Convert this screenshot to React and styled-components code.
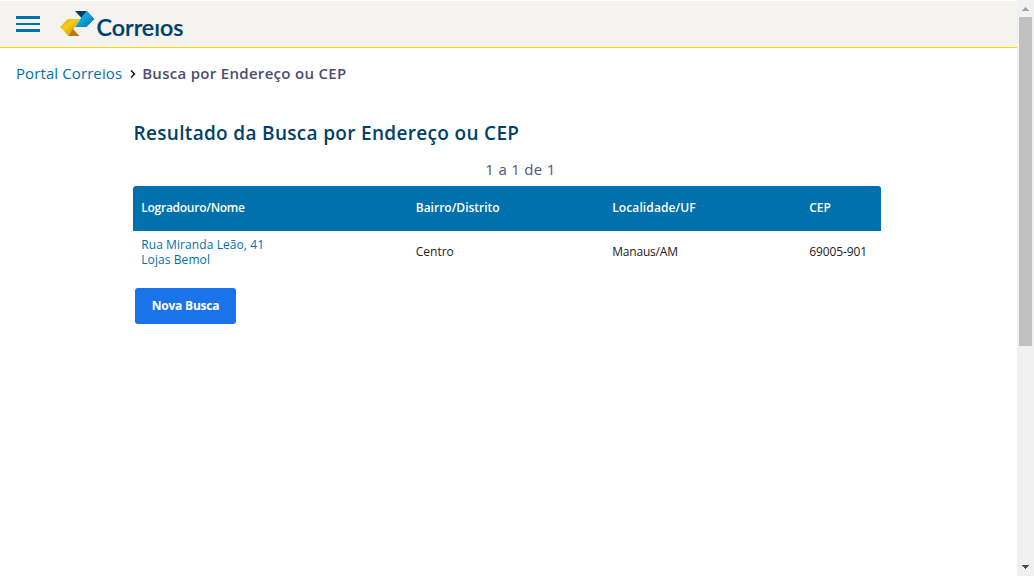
import React from "react";
import styled, { createGlobalStyle } from "styled-components";

const Global = createGlobalStyle`
  *{box-sizing:border-box}
  html,body{margin:0;padding:0;background:#fff;overflow:hidden}
  body{font-family:"Trebuchet MS","Open Sans","Noto Sans",sans-serif;color:#222}
  a{text-decoration:none;color:#0071ad}
`;
const Screen = styled.div`display:flex;height:576px;width:1034px;`;
const Page = styled.div`flex:1;min-width:0;`;
const Header = styled.header`
  height:47px;margin-top:1px;background:#f4f3ef;border-bottom:1px solid #ffd400;
  display:flex;align-items:flex-start;padding-left:16px;
`;
const MenuButton = styled.button`
  width:24px;height:16px;margin:15px 19px 0 0;padding:0;border:0;background:none;
  display:flex;flex-direction:column;justify-content:space-between;
`;
const Bar = styled.span`height:${(p) => p.$thick}px;width:24px;background:#0071ad;`;
const Logo = styled.svg`display:block;margin-top:5px;`;
const Breadcrumb = styled.nav`
  display:flex;align-items:center;height:24px;margin:13px 0 0 16px;font-size:15px;
`;
const Chevron = styled.svg`margin:1px 6px 0 7px;flex:none;`;
const Text = styled.span`
  white-space:nowrap;letter-spacing:${(p) => p.$track || 0}px;
`;
const Current = styled(Text)`font-weight:600;color:#4d4d73;`;
const Content = styled.main`margin:34px 0 0 133px;width:748px;`;
const Title = styled.h1`
  margin:0 0 0 .5px;font-size:19px;line-height:28px;font-weight:600;color:#00416b;letter-spacing:.32px;white-space:nowrap;
`;
const Count = styled.p`
  margin:10px 0 5px 27px;text-align:center;font-size:15px;line-height:24px;letter-spacing:.3px;color:#54547c;
`;
const Row = styled.div`
  display:grid;grid-template-columns:274.5px 196.5px 197px 80px;align-items:center;padding:0;font-size:12px;line-height:15px;
  & > *{padding-left:8.25px;white-space:nowrap}
`;
const HeadRow = styled(Row)`
  height:45px;background:#0071ad;color:#fff;font-weight:600;border-radius:3px 3px 0 0;padding-bottom:3px;
`;
const BodyRow = styled(Row)`
  height:42px;
  & > span{padding-bottom:2px}
`;
const NewSearch = styled.button`
  display:block;width:101px;height:36px;margin:15px 0 0 2px;padding:0 0 2px;border:0;border-radius:3px;background:#1a73e8;
  color:#fff;font:700 12px "Trebuchet MS","Open Sans",sans-serif;letter-spacing:-.2px;
`;
const Scrollbar = styled.aside`
  width:17px;height:576px;background:#f1f1f1;display:flex;flex-direction:column;align-items:center;
`;
const Arrow = styled.svg`display:block;flex:none;`;
const Thumb = styled.div`width:13px;height:329px;background:#c1c1c1;margin-bottom:auto;margin-right:2px;align-self:flex-end;`;

export default function App() {
  return (
    <>
      <Global />
      <Screen>
        <Page>
          <Header>
            <MenuButton aria-label="Menu"><Bar $thick={3} /><Bar $thick={2} /><Bar $thick={3} /></MenuButton>
            <Logo width="130" height="36" viewBox="59 6 130 36" aria-label="Correios">
              <defs>
                <linearGradient id="gold" x1="0" y1="0" x2="1" y2="1">
                  <stop offset="0" stopColor="#e0a400" /><stop offset=".4" stopColor="#f8cc14" /><stop offset=".6" stopColor="#e6b20e" /><stop offset="1" stopColor="#c98a08" />
                </linearGradient>
                <linearGradient id="blue" x1="0" y1="0" x2="1" y2="1">
                  <stop offset="0" stopColor="#0090d0" /><stop offset=".45" stopColor="#12a6e0" /><stop offset="1" stopColor="#006a9f" />
                </linearGradient>
              </defs>
              <path d="M68 19H80L72 31L68 35.5L60 27Z" fill="url(#gold)" />
              <path d="M73 29L79.500 36H68Z" fill="#bd7518" />
              <path d="M75 11H87L81.500 18Z" fill="#003d66" />
              <path d="M87 11L94.500 19L86.500 27H75L81 18Z" fill="url(#blue)" />
              <text x="96.500" y="35.600" textLength="87" lengthAdjust="spacingAndGlyphs" fill="#00416b" stroke="#00416b" strokeWidth=".2" fontFamily="Lato, sans-serif" fontWeight="600" fontSize="22">Correıos</text>
            </Logo>
          </Header>
          <Breadcrumb>
            <Text as="a" href="#" $track={0.1}>Portal Correios</Text>
            <Chevron width="7" height="10" viewBox="0 0 7 10"><path d="M2 1.500L5.500 5L2 8.500" fill="none" stroke="#111" strokeWidth="1.500" /></Chevron>
            <Current $track={0.3}>Busca por Endereço ou CEP</Current>
          </Breadcrumb>
          <Content>
            <Title>Resultado da Busca por Endereço ou CEP</Title>
            <Count>1 a 1 de 1</Count>
            <HeadRow>
              <Text $track={-0.26}>Logradouro/Nome</Text><Text>Bairro/Distrito</Text><Text $track={0.1}>Localidade/UF</Text><Text>CEP</Text>
            </HeadRow>
            <BodyRow>
              <Text as="a" href="#" $track={0.08}>Rua Miranda Leão, 41<br />Lojas Bemol</Text>
              <Text>Centro</Text><Text $track={-0.2}>Manaus/AM</Text><Text $track={-0.1}>69005-901</Text>
            </BodyRow>
            <NewSearch>Nova Busca</NewSearch>
          </Content>
        </Page>
        <Scrollbar>
          <Arrow width="17" height="17" shapeRendering="crispEdges"><path d="M8 7H9V8H10V9H11V10H12V11H5V10H6V9H7V8H8Z" fill="#a3a3a3" /></Arrow>
          <Thumb />
          <Arrow width="17" height="17" shapeRendering="crispEdges"><path d="M5 6H12V7H11V8H10V9H9V10H8V9H7V8H6V7H5Z" fill="#505050" /></Arrow>
        </Scrollbar>
      </Screen>
    </>
  );
}
